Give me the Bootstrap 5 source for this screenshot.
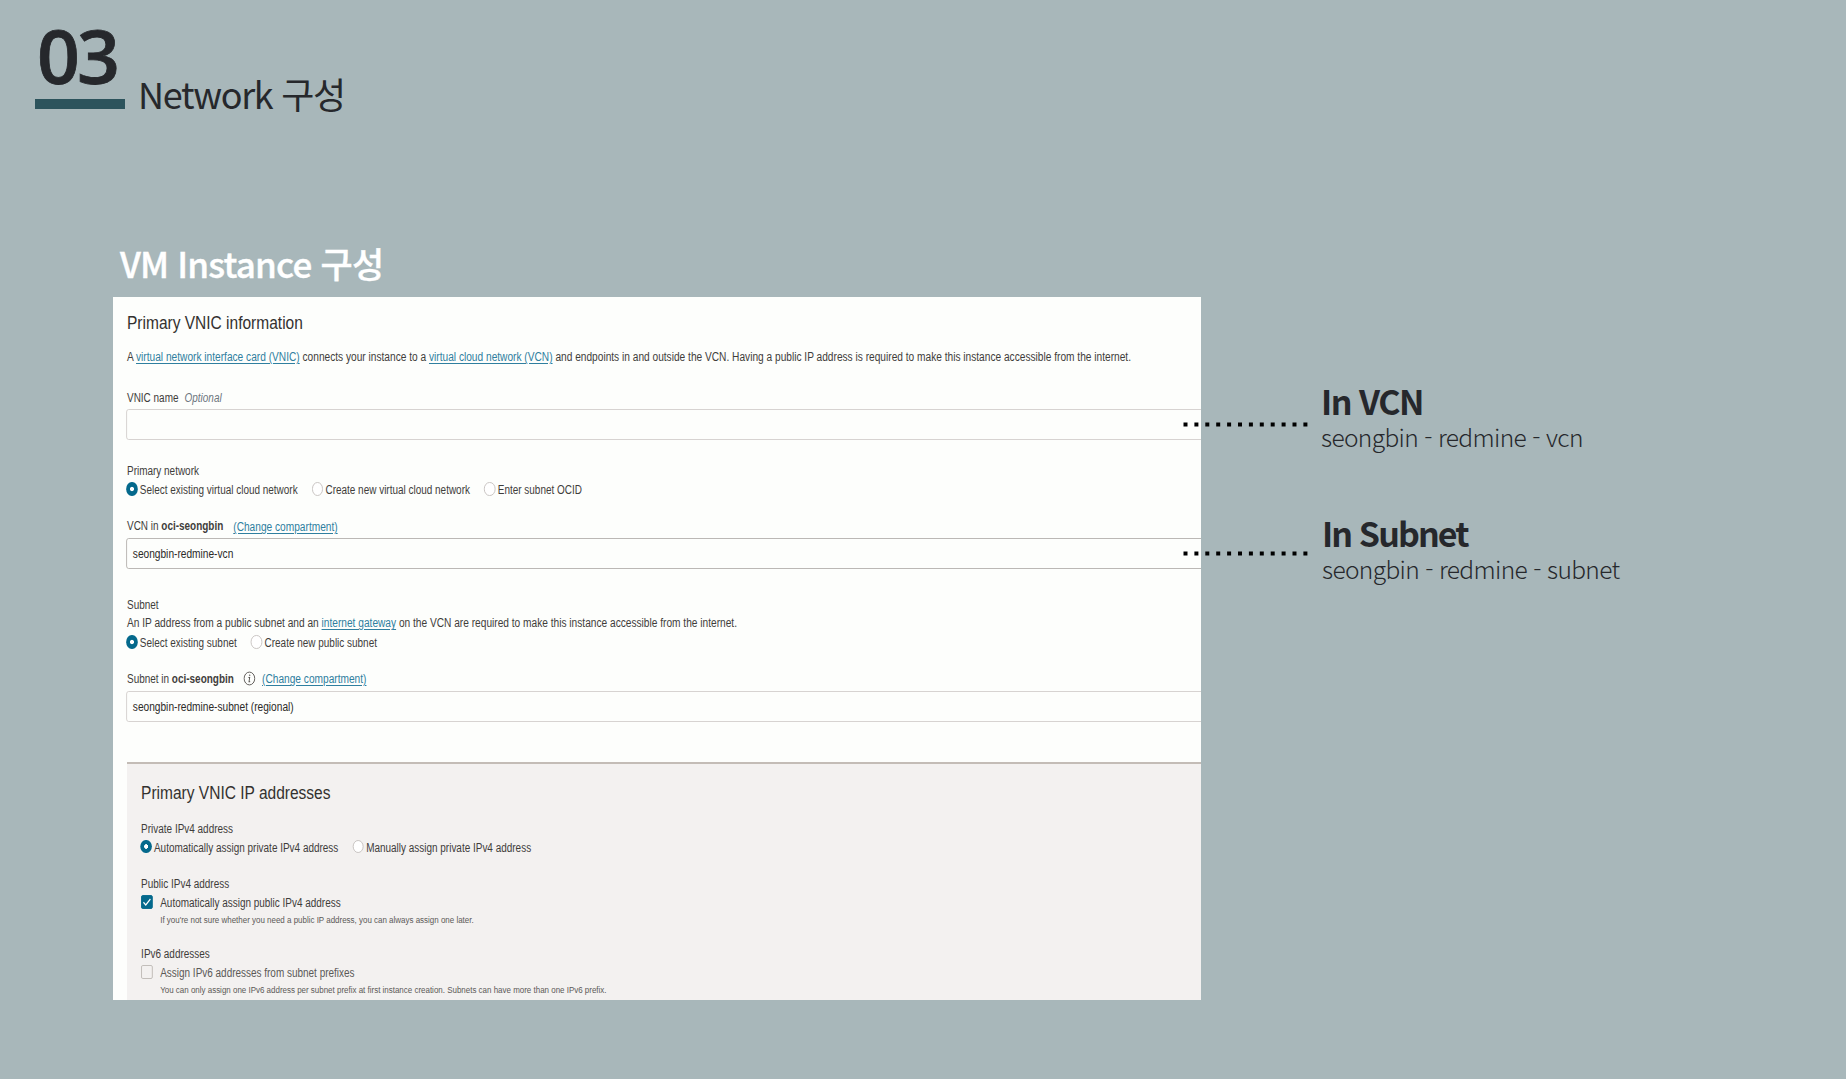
<!DOCTYPE html>
<html lang="ko">
<head>
<meta charset="utf-8">
<meta name="viewport" content="width=device-width, initial-scale=1">
<title>Network 구성</title>
<link href="https://cdn.jsdelivr.net/npm/bootstrap@5.3.0/dist/css/bootstrap.min.css" rel="stylesheet">
<style>
  body { background: #a8b7ba; color: #26282c; font-family: "Noto Sans CJK KR", sans-serif; }
  .slide { width: 1846px; height: 1079px; }
  .slide-head { height: 243px; padding: 15px 0 0 35px; }
  .slide-no { width: 90px; }
  .slide-no b { display: block; font: 600 75px/80px "Open Sans", sans-serif; letter-spacing: -3px; padding-left: 2px; -webkit-text-stroke: .8px; }
  .slide-no i { display: block; height: 10px; margin-top: 4px; background: #2c535c; }
  .slide-title { font-size: 36px; line-height: 40px; letter-spacing: -1.3px; font-weight: 400; margin: 58px 0 0 13px; }
  .sub-title { font-size: 35px; line-height: 40px; letter-spacing: -.8px; font-weight: 500; margin: 0; padding-left: 120px; height: 54px; -webkit-text-stroke: .4px; }
  .work { padding-left: 113px; }

  /* console capture, condensed horizontally */
  .capture { width: 1088px; height: 703px; background: #fdfefc; padding: 14px 0 0 14px; }
  .console { width: 1296px; transform: scaleX(.83); transform-origin: 0 0; font: 12px/16px "Liberation Sans", Arial, sans-serif; color: #3f3d3b; white-space: nowrap; }
  .console a { color: #2f7f9f; text-decoration: underline; text-underline-offset: 2px; }
  .console h2 { font-size: 18.7px; line-height: 24px; font-weight: 400; margin: 0; color: #33312f; }
  .wide { font-size: 12.24px; }
  .field { border: 1.5px solid #d3cfcd; border-radius: 3px 0 0 3px; height: 31px; padding-left: 7px; font-size: 12.24px; line-height: 30px; margin-left: -1px; color: #2b2a28; }
  .field.dark { border: 1px solid #b5b1ae; }
  .opt { padding-left: 15.5px; position: relative; }
  .opt::before { content: ""; position: absolute; left: -1px; top: 0; width: 13.5px; height: 13.5px; border: 1px solid #c4c0bd; border-radius: 50%; background: #fff; }
  .opt.on::before { border: 0; background: radial-gradient(circle, #fff 2px, #04698c 2.6px); }
  .opts { gap: 18px; }
  .chk { width: 14px; height: 14px; border-radius: 2px; border: 1px solid #bdb9b5; margin: 0 5px 0 0; }
  .chk.on { background: #04698c; border-color: #04698c; }
  .hint { font-size: 9.6px; line-height: 12px; padding-left: 23px; margin-top: 3px; color: #5b5957; }
  .panel { background: #f3f1f0; border-top: 2px solid #c3bcb6; margin-top: 39.5px; height: 239px; padding: 17px 0 0 17px; }
  .g2 { margin-top: 2px; } .g3 { margin-top: 3px; } .g4 { margin-top: 4px; } .g20 { margin-top: 20px; }

  .notes { margin-left: -18px; padding-top: 84px; gap: 60px; z-index: 1; }
  .dots { width: 126px; height: 5px; margin-top: 41px; }
  .dots.low { margin-top: 38px; }
  .note-title { font-size: 34px; line-height: 40px; font-weight: 700; letter-spacing: -1.5px; }
  .note-title.tight { letter-spacing: -1.9px; }
  .note-text { font-size: 24.5px; line-height: 32px; font-weight: 300; letter-spacing: -.65px; }
</style>
</head>
<body>
<main class="slide overflow-hidden">
  <header class="slide-head d-flex align-items-start">
    <div class="slide-no"><b>03</b><i></i></div>
    <h1 class="slide-title">Network 구성</h1>
  </header>
  <h2 class="sub-title text-white">VM Instance 구성</h2>
  <div class="work d-flex align-items-start">
    <section class="capture overflow-hidden flex-shrink-0">
      <div class="console">
        <h2>Primary VNIC information</h2>
        <div class="wide" style="margin-top:14px">A <a href="#">virtual network interface card (VNIC)</a> connects your instance to a <a href="#">virtual cloud network (VCN)</a> and endpoints in and outside the VCN. Having a public IP address is required to make this instance accessible from the internet.</div>
        <div style="margin-top:25px">VNIC name <em class="ms-1 text-secondary">Optional</em></div>
        <div class="field g3"></div>
        <div style="margin-top:23px">Primary network</div>
        <div class="d-flex opts g3"><span class="opt on">Select existing virtual cloud network</span><span class="opt">Create new virtual cloud network</span><span class="opt">Enter subnet OCID</span></div>
        <div class="d-flex g20"><span>VCN in <b>oci-seongbin</b></span><a class="wide" style="margin:1px 0 -1px 12px" href="#">(Change compartment)</a></div>
        <div class="field dark g4">seongbin-redmine-vcn</div>
        <div style="margin-top:28px">Subnet</div>
        <div class="wide g2">An IP address from a public subnet and an <a href="#">internet gateway</a> on the VCN are required to make this instance accessible from the internet.</div>
        <div class="d-flex opts g4"><span class="opt on">Select existing subnet</span><span class="opt">Create new public subnet</span></div>
        <div class="d-flex g20"><span>Subnet in <b>oci-seongbin</b></span>
          <svg style="margin:0 8px 0 11px" width="15" height="15" viewBox="0 0 15 15" fill="none" stroke="#55524f"><circle cx="7.5" cy="7.5" r="6.4"/><path d="M6.3 6.5h1.5l-.8 4.2h1.4" stroke-width="1.1"/><circle cx="7.9" cy="4.2" r=".5" fill="#55524f" stroke-width=".5"/></svg>
          <a class="wide" href="#">(Change compartment)</a></div>
        <div class="field g4">seongbin-redmine-subnet (regional)</div>
        <div class="panel">
          <h2>Primary VNIC IP addresses</h2>
          <div style="margin-top:16px">Private IPv4 address</div>
          <div class="d-flex opts g3"><span class="opt on">Automatically assign private IPv4 address</span><span class="opt">Manually assign private IPv4 address</span></div>
          <div class="g20">Public IPv4 address</div>
          <div class="d-flex g3"><svg class="chk on" viewBox="0 0 12 12" fill="none" stroke="#fff" stroke-width="1.4"><path d="M1.8 6.2l2.8 2.8 5.6-6"/></svg><span class="ps-1">Automatically assign public IPv4 address</span></div>
          <div class="hint">If you're not sure whether you need a public IP address, you can always assign one later.</div>
          <div style="margin-top:20px">IPv6 addresses</div>
          <div class="d-flex g3"><span class="chk"></span><span class="ps-1" style="color:#5b5957">Assign IPv6 addresses from subnet prefixes</span></div>
          <div class="hint">You can only assign one IPv6 address per subnet prefix at first instance creation. Subnets can have more than one IPv6 prefix.</div>
        </div>
      </div>
    </section>
    <aside class="notes d-flex flex-column">
      <div class="d-flex align-items-start">
        <svg class="dots" viewBox="0 0 126 5"><path d="M.5 2.5H126" stroke="#000" stroke-width="4" stroke-dasharray="4 6.9"/></svg>
        <div style="margin-left:12px"><div class="note-title">In VCN</div><div class="note-text">seongbin - redmine - vcn</div></div>
      </div>
      <div class="d-flex align-items-start">
        <svg class="dots low" viewBox="0 0 126 5"><path d="M.5 2.5H126" stroke="#000" stroke-width="4" stroke-dasharray="4 6.9"/></svg>
        <div style="margin-left:13px"><div class="note-title tight">In Subnet</div><div class="note-text">seongbin - redmine - subnet</div></div>
      </div>
    </aside>
  </div>
</main>
<script src="https://cdn.jsdelivr.net/npm/bootstrap@5.3.0/dist/js/bootstrap.bundle.min.js"></script>
</body>
</html>
